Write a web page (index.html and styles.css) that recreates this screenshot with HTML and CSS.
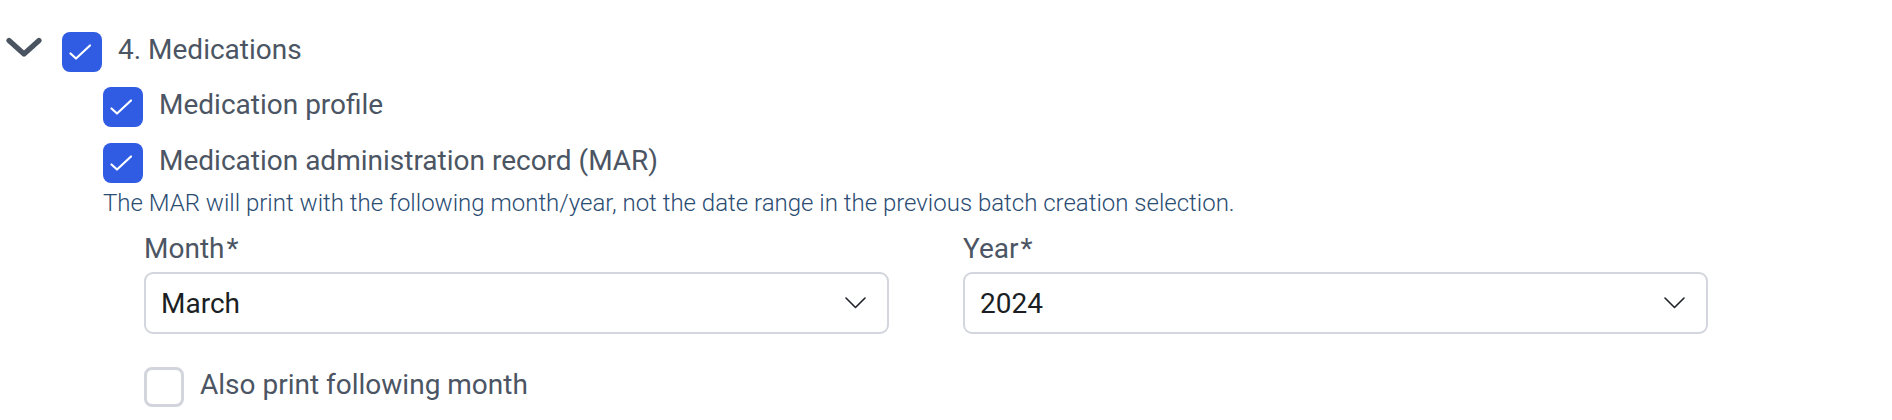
FILE: index.html
```html
<!DOCTYPE html>
<html lang="en">
<head>
<meta charset="utf-8">
<title>Medications</title>
<link rel="stylesheet" href="styles.css">
</head>
<body>
<div class="section">
  <div class="row top">
    <span class="toggle">
      <svg width="48" height="40" viewBox="0 0 48 40"><path d="M9 8.5 L24 22 L39 8.5" fill="none" stroke="#4a5461" stroke-width="5.2" stroke-linecap="round" stroke-linejoin="round"/></svg>
    </span>
    <span class="cb checked"><svg width="40" height="40" viewBox="0 0 40 40"><path d="M8.5 21.5 L14 26.5 L28 13.5" fill="none" stroke="#fff" stroke-width="2.2" stroke-linecap="round" stroke-linejoin="round"/></svg></span>
    <span class="label">4. Medications</span>
  </div>
  <div class="sub">
    <div class="row">
      <span class="cb checked"><svg width="40" height="40" viewBox="0 0 40 40"><path d="M8.5 21.5 L14 26.5 L28 13.5" fill="none" stroke="#fff" stroke-width="2.2" stroke-linecap="round" stroke-linejoin="round"/></svg></span>
      <span class="label">Medication profile</span>
    </div>
    <div class="row">
      <span class="cb checked"><svg width="40" height="40" viewBox="0 0 40 40"><path d="M8.5 21.5 L14 26.5 L28 13.5" fill="none" stroke="#fff" stroke-width="2.2" stroke-linecap="round" stroke-linejoin="round"/></svg></span>
      <span class="label">Medication administration record (MAR)</span>
    </div>
    <p class="help">The MAR will print with the following month/year, not the date range in the previous batch creation selection.</p>
    <div class="fields">
      <div class="field">
        <div class="field-label">Month<span class="req">*</span></div>
        <div class="select"><span class="value">March</span>
          <svg width="21" height="12" viewBox="0 0 21 12"><path d="M1 1 L10.5 10.5 L20 1" fill="none" stroke="#1f2329" stroke-width="1.6" stroke-linecap="round" stroke-linejoin="round"/></svg>
        </div>
      </div>
      <div class="field">
        <div class="field-label">Year<span class="req">*</span></div>
        <div class="select"><span class="value">2024</span>
          <svg width="21" height="12" viewBox="0 0 21 12"><path d="M1 1 L10.5 10.5 L20 1" fill="none" stroke="#1f2329" stroke-width="1.6" stroke-linecap="round" stroke-linejoin="round"/></svg>
        </div>
      </div>
    </div>
    <div class="row also">
      <span class="cb empty"></span>
      <span class="label">Also print following month</span>
    </div>
  </div>
</div>
</body>
</html>
```
FILE: styles.css
```css
html, body {
  margin: 0;
  padding: 0;
  background: #ffffff;
}
body {
  font-family: Roboto, "Liberation Sans", sans-serif;
  color: #4b5563;
}
.section {
  padding-top: 32px;
}
.row {
  display: flex;
  align-items: flex-start;
  height: 40px;
}
.toggle {
  width: 48px;
  height: 40px;
  display: flex;
  align-items: center;
  margin-right: 14px;
}
.toggle svg {
  display: block;
}
.cb {
  width: 40px;
  height: 40px;
  border-radius: 8px;
  box-sizing: border-box;
  flex: none;
  margin-right: 16px;
}
.cb svg {
  display: block;
}
.cb.checked {
  background: #2f5ce3;
}
.cb.empty {
  border: 3px solid #d2d5db;
  background: #fff;
}
.label {
  font-size: 28px;
  line-height: 36px;
  color: #4b5563;
}
.sub {
  padding-left: 103px;
  margin-top: 15px;
  display: flex;
  flex-direction: column;
  gap: 16px;
}
.help {
  margin: -10px 0 0 0;
  font-size: 24px;
  line-height: 28px;
  font-weight: 300;
  color: #2a4c72;
}
.fields {
  display: flex;
  gap: 74px;
  padding-left: 41px;
  margin-top: 0;
}
.field {
  width: 745px;
  display: flex;
  flex-direction: column;
  gap: 7px;
}
.field-label {
  font-size: 28px;
  line-height: 32px;
  color: #4b5563;
}
.req {
  margin-left: 2px;
}
.select {
  height: 62px;
  box-sizing: border-box;
  border: 2px solid #d3d6dc;
  border-radius: 9px;
  display: flex;
  align-items: center;
  justify-content: space-between;
  padding: 0 21px 0 15px;
}
.select .value {
  font-size: 28px;
  color: #1b1f24;
}
.select svg {
  display: block;
}
.also {
  padding-left: 41px;
  margin-top: 17px;
}
```
